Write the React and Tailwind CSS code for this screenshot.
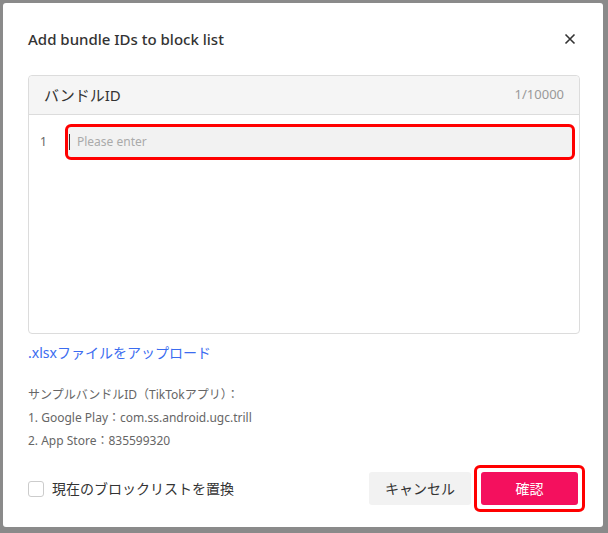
import React from "react";

function App() {
  return (
    <div
      className="w-[608px] h-[533px] bg-[#8a8a8a] pt-[3px] pl-[3px]"
      style={{ fontFamily: '"Noto Sans", "Noto Sans CJK JP", sans-serif' }}
    >
      <div className="w-[600px] h-[524px] bg-white rounded-[3px] pl-[25px] pr-[23px] pt-[25px] flex flex-col">
        <div className="flex items-center justify-between h-[22px]">
          <h1 className="text-[15px] font-medium text-[#333]">Add bundle IDs to block list</h1>
          <svg width="12" height="12" viewBox="0 0 12 12" className="mr-[4px]">
            <path d="M1.5 1.5 L10.5 10.5 M10.5 1.5 L1.5 10.5" stroke="#333" strokeWidth="1.6" />
          </svg>
        </div>

        <div className="mt-[25px] h-[259px] border border-[#dcdcdc] rounded-[4px] flex flex-col">
          <div className="h-[39px] bg-[#f5f5f5] border-b border-[#dcdcdc] rounded-t-[4px] flex items-center justify-between pl-[15px] pr-[15px]">
            <span className="text-[15px] text-[#333]">バンドルID</span>
            <span className="text-[13px] text-[#999]">1/10000</span>
          </div>
          <div className="flex items-center pt-[9px] pl-[11px] pr-[4px]">
            <span className="w-[25px] text-[12px] text-[#666]">1</span>
            <div className="flex-1 h-[36px] border-[3px] border-[#f00] rounded-[6px] bg-[#f2f2f2] flex items-center pl-[9px] relative">
              <span className="absolute left-[1px] top-[7px] w-px h-[16px] bg-[#333]" />
              <span className="text-[12px] text-[#aaa]">Please enter</span>
            </div>
          </div>
        </div>

        <a className="mt-[9px] text-[14px] text-[#3b6cf0] leading-[20px]">.xlsxファイルをアップロード</a>

        <div className="mt-[23px] text-[12px] text-[#666] flex flex-col gap-[5px] leading-[18px]">
          <span>サンプルバンドルID（TikTokアプリ）：</span>
          <span>1. Google Play：com.ss.android.ugc.trill</span>
          <span>2. App Store：835599320</span>
        </div>

        <div className="mt-[15px] flex items-center justify-between">
          <label className="flex items-center gap-[8px]">
            <span className="w-[16px] h-[16px] border border-[#ccc] rounded-[3px] bg-white" />
            <span className="text-[14px] text-[#333]">現在のブロックリストを置換</span>
          </label>
          <div className="flex items-center gap-[3px] -mr-[5px]">
            <button className="w-[102px] h-[33px] bg-[#f2f2f2] rounded-[3px] text-[14px] text-[#333]">
              キャンセル
            </button>
            <div className="p-[4px] border-[3px] border-[#f00] rounded-[6px]">
              <button className="w-[97px] h-[33px] bg-[#f4105e] rounded-[3px] text-[14px] text-white">
                確認
              </button>
            </div>
          </div>
        </div>
      </div>
    </div>
  );
}

export default App;
